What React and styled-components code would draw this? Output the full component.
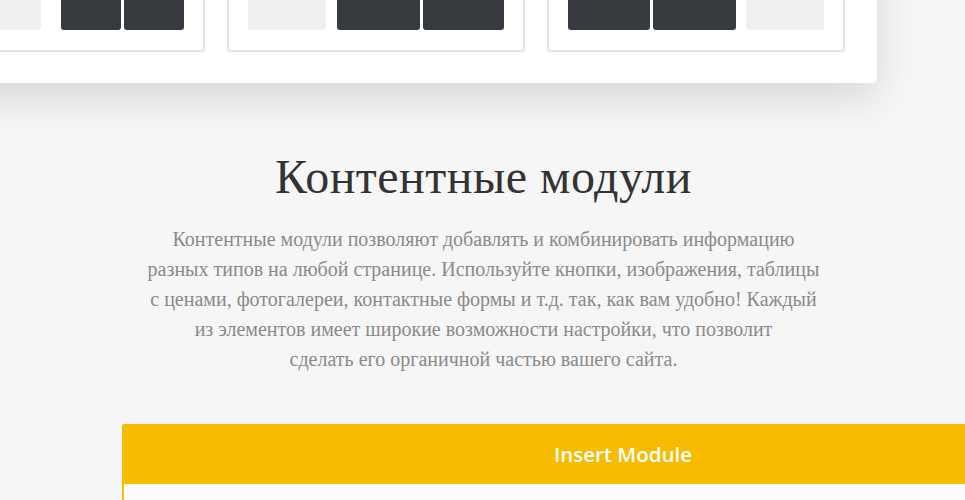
import React from 'react';
import styled, { createGlobalStyle } from 'styled-components';

const GlobalStyle = createGlobalStyle`
  html, body {
    margin: 0;
    padding: 0;
    background: #f6f6f6;
    overflow: hidden;
  }
`;

const Page = styled.div`
  width: 965px;
  height: 500px;
  overflow: hidden;
  background: #f6f6f6;
`;

const PreviewCard = styled.div`
  box-sizing: border-box;
  width: 970px;
  margin: -63px 0 0 -93px;
  padding: 31px 31px 31px 0;
  display: flex;
  gap: 22px;
  background: #ffffff;
  border-radius: 5px;
  box-shadow: 0 14px 40px rgba(0, 0, 0, 0.13);
`;

const ModuleBox = styled.div`
  flex: none;
  width: 298px;
  box-sizing: border-box;
  border: 2px solid #e4e4e4;
  border-radius: 4px;
  padding: 20px 19px;
  display: flex;
  justify-content: space-between;
`;

const ButtonGroup = styled.div`
  display: flex;
  gap: 3px;
`;

const Block = styled.div`
  height: 40px;
  width: ${p => p.w}px;
  border-radius: 0 0 3px 3px;
  background: ${p => (p.dark ? '#373a3f' : '#f0f0f0')};
`;

const Section = styled.section`
  display: flex;
  flex-direction: column;
  align-items: center;
  padding-top: 66px;
  padding-left: 2px;
`;

const Title = styled.h2`
  margin: 0;
  font-family: 'Liberation Serif', 'DejaVu Serif', serif;
  font-weight: 400;
  font-size: 48px;
  line-height: 56px;
  color: #333333;
  letter-spacing: 0.5px;
`;

const Lead = styled.p`
  margin: 19px 0 0;
  width: 760px;
  text-align: center;
  font-family: 'Liberation Serif', 'DejaVu Serif', serif;
  font-size: 20px;
  line-height: 30px;
  color: #8a8a8a;
`;

const InsertPanel = styled.div`
  margin: 50px 0 0 122px;
  width: 1000px;
  border-left: 2px solid #f7bb00;
  border-radius: 3px 0 0 0;
  background: #fbfbfb;
`;

const PanelHeader = styled.div`
  height: 60px;
  margin-left: -2px;
  display: flex;
  align-items: center;
  justify-content: center;
  background: #f7bb00;
  border-radius: 3px 3px 0 0;
  font-family: 'Open Sans', sans-serif;
  font-weight: 600;
  font-size: 20.5px;
  color: #ffffff;
`;

const PanelBody = styled.div`
  height: 40px;
`;

const leadLines = [
  'Контентные модули позволяют добавлять и комбинировать информацию',
  'разных типов на любой странице. Используйте кнопки, изображения, таблицы',
  'с ценами, фотогалереи, контактные формы и т.д. так, как вам удобно! Каждый',
  'из элементов имеет широкие возможности настройки, что позволит',
  'сделать его органичной частью вашего сайта.',
];

export default function App() {
  return (
    <Page>
      <GlobalStyle />
      <PreviewCard>
        <ModuleBox>
          <Block w={113} />
          <ButtonGroup>
            <Block dark w={60} />
            <Block dark w={60} />
          </ButtonGroup>
        </ModuleBox>
        <ModuleBox>
          <Block w={78} />
          <ButtonGroup>
            <Block dark w={83} />
            <Block dark w={81} />
          </ButtonGroup>
        </ModuleBox>
        <ModuleBox>
          <ButtonGroup>
            <Block dark w={82} />
            <Block dark w={83} />
          </ButtonGroup>
          <Block w={78} />
        </ModuleBox>
      </PreviewCard>
      <Section>
        <Title>Контентные модули</Title>
        <Lead>
          {leadLines.map((line, i) => (
            <React.Fragment key={i}>
              {line}
              {i < leadLines.length - 1 && <br />}
            </React.Fragment>
          ))}
        </Lead>
      </Section>
      <InsertPanel>
        <PanelHeader>Insert Module</PanelHeader>
        <PanelBody />
      </InsertPanel>
    </Page>
  );
}
